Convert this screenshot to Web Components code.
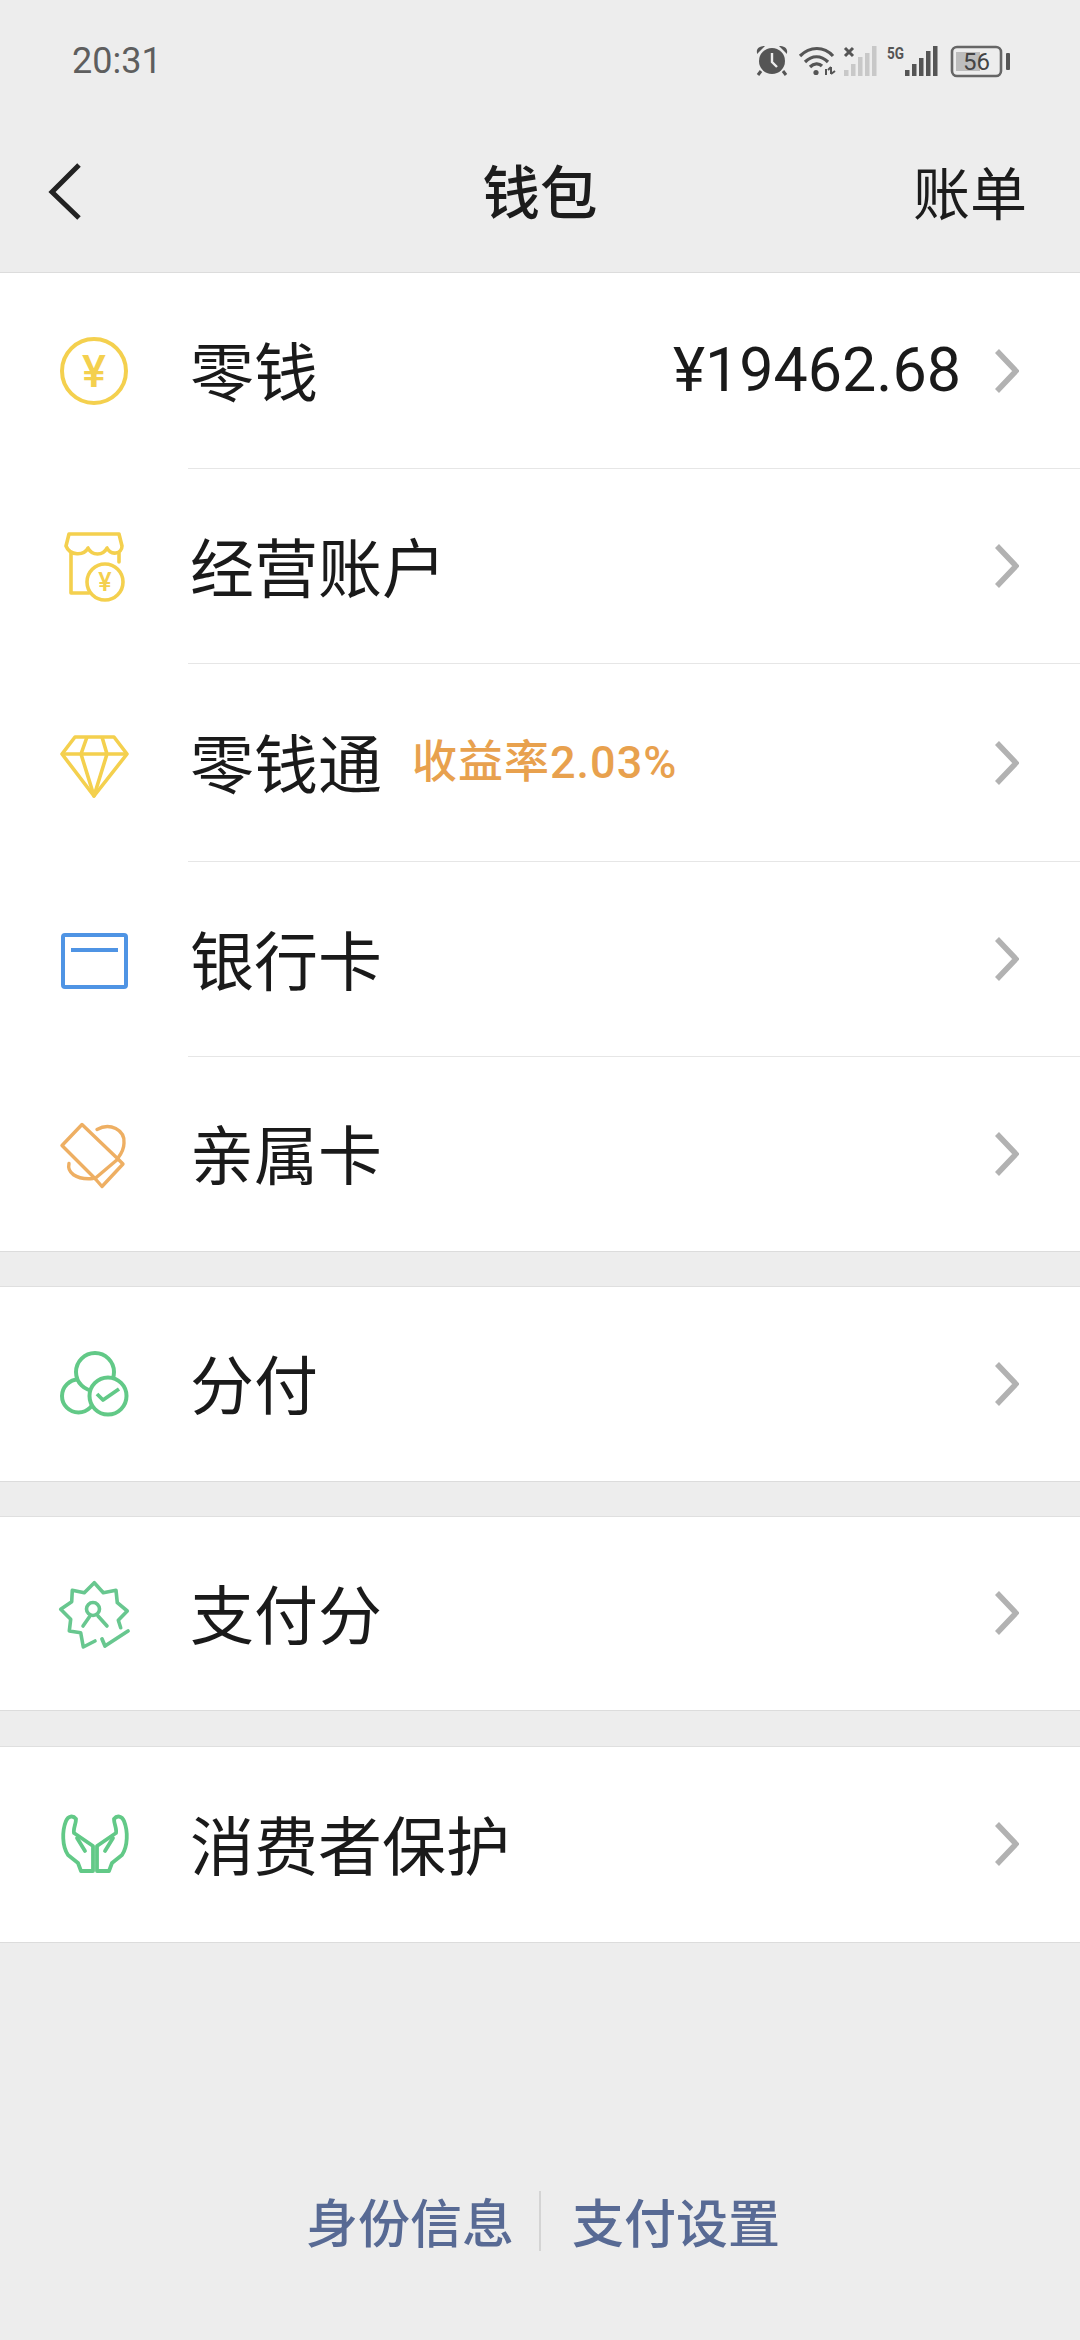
<!DOCTYPE html>
<html lang="zh">
<head>
<meta charset="utf-8">
<title>钱包</title>
<style>
  html, body { margin: 0; padding: 0; background: #ededed; }
  body {
    width: 1080px;
    height: 2340px;
    overflow: hidden;
    display: flex;
    flex-direction: column;
    font-family: Roboto, "Noto Sans CJK SC", sans-serif;
    color: #1a1a1a;
  }
  svg { display: block; }
</style>
</head>
<body>
  <status-bar time="20:31"></status-bar>
  <nav-bar title="钱包" action="账单"></nav-bar>

  <wallet-group first>
    <wallet-row label="零钱" value="¥19462.68" h="196">
      <svg slot="icon" width="110" height="110" viewBox="0 0 110 110" fill="none" stroke="#f4d04e" stroke-width="4">
        <circle cx="54" cy="55" r="32"/>
        <text x="54" y="71" text-anchor="middle" font-family="Roboto, sans-serif" font-size="45" font-weight="500" fill="#f4d04e" stroke="none">¥</text>
      </svg>
    </wallet-row>
    <wallet-row label="经营账户" h="195">
      <svg slot="icon" width="110" height="110" viewBox="0 0 110 110" fill="none" stroke="#f4d04e" stroke-width="3.6" stroke-linejoin="round" stroke-linecap="round">
        <path d="M29 22H79L82 34C82 42 71 44 67 36C63 44 52 44 48 36C44 44 30 44 26 34Z"/>
        <path d="M31 41V81H49M79 41V50"/>
        <circle cx="65" cy="70" r="18"/>
        <text x="65" y="79" text-anchor="middle" font-family="Roboto, sans-serif" font-size="25" font-weight="500" fill="#f4d04e" stroke="none">¥</text>
      </svg>
    </wallet-row>
    <wallet-row label="零钱通" tag="收益率2.03%" h="198">
      <svg slot="icon" width="110" height="110" viewBox="0 0 110 110" fill="none" stroke="#f4d04e" stroke-width="3.6" stroke-linejoin="round">
        <path d="M35 29H74L87 46L54 88L22 46Z"/>
        <path d="M22 46H87M47 29L41 46L54 88L67 46L62 29"/>
      </svg>
    </wallet-row>
    <wallet-row label="银行卡" h="195">
      <svg slot="icon" width="110" height="110" viewBox="0 0 110 110" fill="none" stroke="#4f94e4" stroke-width="4">
        <rect x="23" y="30" width="63" height="52" rx="2"/>
        <path d="M31 45H78"/>
      </svg>
    </wallet-row>
    <wallet-row label="亲属卡" h="194">
      <svg slot="icon" width="110" height="110" viewBox="0 0 110 110" fill="none" stroke="#eeaf63" stroke-width="3.4" stroke-linejoin="round" stroke-linecap="round">
        <path d="M42 25.500L78 60L55 79.500L22 46.500Z"/>
        <path d="M78 60L83 65L62 87.500L55 79.500"/>
        <path d="M57 30.500C70 23 85 31 84 44C84 50 81 55 78 59"/>
        <path d="M29 64.500C27 73 35 81 53 79.500"/>
      </svg>
    </wallet-row>
  </wallet-group>

  <wallet-group>
    <wallet-row label="分付" h="194">
      <svg slot="icon" width="110" height="110" viewBox="0 0 110 110" stroke="#62c987" stroke-width="4" fill="#fff" stroke-linejoin="round">
        <circle cx="38.500" cy="67" r="16.500"/>
        <circle cx="55" cy="43" r="19"/>
        <circle cx="68" cy="67" r="18.500"/>
        <path d="M57 65L63 71L79 60" fill="none" stroke-width="3.800"/>
      </svg>
    </wallet-row>
  </wallet-group>

  <wallet-group>
    <wallet-row label="支付分" h="193">
      <svg slot="icon" width="110" height="110" viewBox="0 0 110 110" fill="none" stroke="#68c78f" stroke-width="3.6" stroke-linejoin="round" stroke-linecap="round">
        <path d="M80.700 68.700L78.300 61.300L87.300 52L77.300 43.700L76 31.300L63.300 33.700L54.300 23.700L44.300 33.700L32.300 31.300L31.700 42.700L20.700 50.300L30.700 60.300L29.300 72L40.700 73.700L43.300 88L55 82"/>
        <circle cx="53" cy="50" r="6.500"/>
        <path d="M43 67L50 57M67 67L58 57"/>
        <path d="M62 80L65 87L88 72" stroke-width="3.800"/>
      </svg>
    </wallet-row>
  </wallet-group>

  <wallet-group class="last">
    <wallet-row label="消费者保护" h="195">
      <svg slot="icon" width="110" height="110" viewBox="0 0 110 110" fill="none" stroke="#62c987" stroke-width="3.8" stroke-linejoin="round" stroke-linecap="round">
        <path d="M53 81H41L38 73L28 65C22 56 22 41 26 31C28 26 33 25 36 29C36 34 33 39 34 43L53 56V81Z"/>
        <path d="M37 48L45 61"/>
        <path d="M57 81H69L72 73L82 65C88 56 88 41 84 31C82 26 77 25 74 29C74 34 77 39 76 43L57 56V81Z"/>
        <path d="M73 48L65 61"/>
      </svg>
    </wallet-row>
  </wallet-group>

  <footer-links>
    <span>身份信息</span>
    <span>支付设置</span>
  </footer-links>

<script>
class StatusBar extends HTMLElement {
  connectedCallback() {
    const time = this.getAttribute('time') || '';
    this.attachShadow({ mode: 'open' }).innerHTML = `
      <style>
        :host {
          display: flex;
          justify-content: space-between;
          align-items: center;
          height: 110px;
          padding: 0 40px 0 72px;
        }
        .time {
          font: 400 36px Roboto, sans-serif;
          color: #5e5e5e;
          margin-top: 11px;
        }
        svg { display: block; }
        text { font-family: Roboto, sans-serif; }
      </style>
      <span class="time">${time}</span>
      <svg width="320" height="70" viewBox="0 0 320 70">
        <!-- alarm -->
        <g fill="#555">
          <circle cx="52" cy="41" r="13"/>
          <path d="M37 33C36 28 40 26 45 26L37 34ZM67 33C68 28 64 26 59 26L67 34Z"/>
        </g>
        <path d="M52 33V42L57 47" fill="none" stroke="#ededed" stroke-width="2.400"/>
        <path d="M41 51L38 55M63 51L66 55" stroke="#555" stroke-width="3"/>
        <!-- wifi -->
        <g fill="none" stroke="#555" stroke-width="3.200">
          <path d="M80 36C90 26 104 26 113 36"/>
          <path d="M85 42C92 35 101 35 108 42"/>
          <path d="M90 47C94 43 99 43 102 46"/>
        </g>
        <circle cx="96" cy="52.500" r="2.600" fill="#555"/>
        <path d="M106 49V55M111 47V54M108 50L111 47M111 54L115 51" stroke="#555" stroke-width="2" fill="none"/>
        <!-- sim 1: no signal -->
        <path d="M125 28L133 36M133 28L125 36" stroke="#555" stroke-width="3"/>
        <g fill="#c8c8c8">
          <rect x="124" y="50" width="4.500" height="6"/>
          <rect x="131" y="44" width="4.500" height="12"/>
          <rect x="138" y="37" width="4.500" height="19"/>
          <rect x="145" y="33" width="4.500" height="23"/>
          <rect x="152" y="26" width="4.500" height="30"/>
        </g>
        <!-- sim 2: 5G -->
        <text x="167" y="39" font-size="17" font-weight="700" fill="#555" textLength="17" lengthAdjust="spacingAndGlyphs">5G</text>
        <g fill="#555">
          <rect x="185" y="50" width="4.500" height="6"/>
          <rect x="192" y="44" width="4.500" height="12"/>
          <rect x="199" y="38" width="4.500" height="18"/>
          <rect x="206" y="31" width="4.500" height="25"/>
          <rect x="213" y="26" width="4.500" height="30"/>
        </g>
        <!-- battery -->
        <rect x="232" y="27" width="49" height="29" rx="5" fill="none" stroke="#666" stroke-width="2.600"/>
        <rect x="236" y="32" width="24" height="19" fill="#bdbdbd"/>
        <rect x="286" y="33" width="4" height="17" rx="1" fill="#555"/>
        <text x="256.500" y="50" text-anchor="middle" font-size="24" fill="#444">56</text>
      </svg>
    `;
  }
}

class NavBar extends HTMLElement {
  connectedCallback() {
    const title = this.getAttribute('title') || '';
    const action = this.getAttribute('action') || '';
    this.attachShadow({ mode: 'open' }).innerHTML = `
      <style>
        :host {
          display: grid;
          grid-template-columns: 1fr auto 1fr;
          align-items: center;
          height: 163px;
          box-sizing: border-box;
          padding: 0 53px;
          border-bottom: 1px solid #dcdcdc;
          font-family: "Noto Sans CJK SC", sans-serif;
          color: #1c1c1c;
        }
        svg { display: block; margin: 2px 0 0 -7px; }
        .title { font-size: 57.5px; font-weight: 500; line-height: 1; margin-top: -2px; }
        .action { font-size: 57px; line-height: 1; justify-self: end; margin-top: -2px; }
      </style>
      <svg width="38" height="62" viewBox="0 0 38 62" fill="none" stroke="#222" stroke-width="5">
        <path d="M33 4L6 31L33 57"/>
      </svg>
      <span class="title">${title}</span>
      <span class="action">${action}</span>
    `;
  }
}

class WalletGroup extends HTMLElement {
  constructor() {
    super();
    this.attachShadow({ mode: 'open' }).innerHTML = `
      <style>
        :host {
          display: block;
          background: #fff;
          margin-top: 34px;
          border-top: 1px solid #dfdfdf;
          border-bottom: 1px solid #dcdcdc;
        }
        :host([first]) { margin-top: 0; border-top: 0; }
        :host(.last) { margin-top: 35px; }
        ::slotted(wallet-row:last-child) { --sep: transparent; }
      </style>
      <slot></slot>
    `;
  }
}

class WalletRow extends HTMLElement {
  connectedCallback() {
    const label = this.getAttribute('label') || '';
    const value = this.getAttribute('value');
    const tag = this.getAttribute('tag');
    const h = this.getAttribute('h') || '195';
    this.attachShadow({ mode: 'open' }).innerHTML = `
      <style>
        :host {
          display: flex;
          align-items: stretch;
          height: ${h}px;
          padding-left: 40px;
          box-sizing: border-box;
          background: #fff;
        }
        .icon {
          flex: none;
          width: 110px;
          align-self: center;
        }
        .body {
          flex: 1;
          display: flex;
          align-items: center;
          margin-left: 38px;
          padding: 0 61px 0 2px;
          border-bottom: 1px solid var(--sep, #e6e6e6);
        }
        .label {
          font: 400 64px/1 "Noto Sans CJK SC", sans-serif;
          color: #1a1a1a;
          margin-bottom: 5px;
        }
        .tag {
          font: 500 45px/1 Roboto, "Noto Sans CJK SC", sans-serif;
          color: #e8a14e;
          margin-left: 30px;
          letter-spacing: 1px;
        }
        .value {
          margin-left: auto;
          margin-right: 34px;
          font: 400 61px/1 Roboto, sans-serif;
          color: #1a1a1a;
        }
        .chevron { flex: none; }
        .chevron.end { margin-left: auto; }
      </style>
      <div class="icon"><slot name="icon"></slot></div>
      <div class="body">
        <span class="label">${label}</span>
        ${tag ? `<span class="tag">${tag}</span>` : ''}
        ${value ? `<span class="value">${value}</span>` : ''}
        <svg class="chevron ${value ? '' : 'end'}" width="24" height="46" viewBox="0 0 24 46" fill="none" stroke="#b2b2b2" stroke-width="5.500">
          <path d="M2 3L21 23L2 43"/>
        </svg>
      </div>
    `;
  }
}

class FooterLinks extends HTMLElement {
  constructor() {
    super();
    this.attachShadow({ mode: 'open' }).innerHTML = `
      <style>
        :host {
          display: flex;
          justify-content: center;
          align-items: center;
          margin-top: 248px;
          height: 60px;
          padding-left: 6px;
          font: 500 52px/1 "Noto Sans CJK SC", sans-serif;
          color: #586a94;
        }
        .divider {
          width: 2px;
          height: 60px;
          background: #d4d4d4;
          margin: 0 31px 0 25px;
        }
      </style>
      <span id="a"></span><span class="divider"></span><span id="b"></span>
    `;
  }
  connectedCallback() {
    const items = this.querySelectorAll('span');
    this.shadowRoot.getElementById('a').textContent = items[0].textContent;
    this.shadowRoot.getElementById('b').textContent = items[1].textContent;
  }
}

customElements.define('status-bar', StatusBar);
customElements.define('nav-bar', NavBar);
customElements.define('wallet-group', WalletGroup);
customElements.define('wallet-row', WalletRow);
customElements.define('footer-links', FooterLinks);
</script>
</body>
</html>
